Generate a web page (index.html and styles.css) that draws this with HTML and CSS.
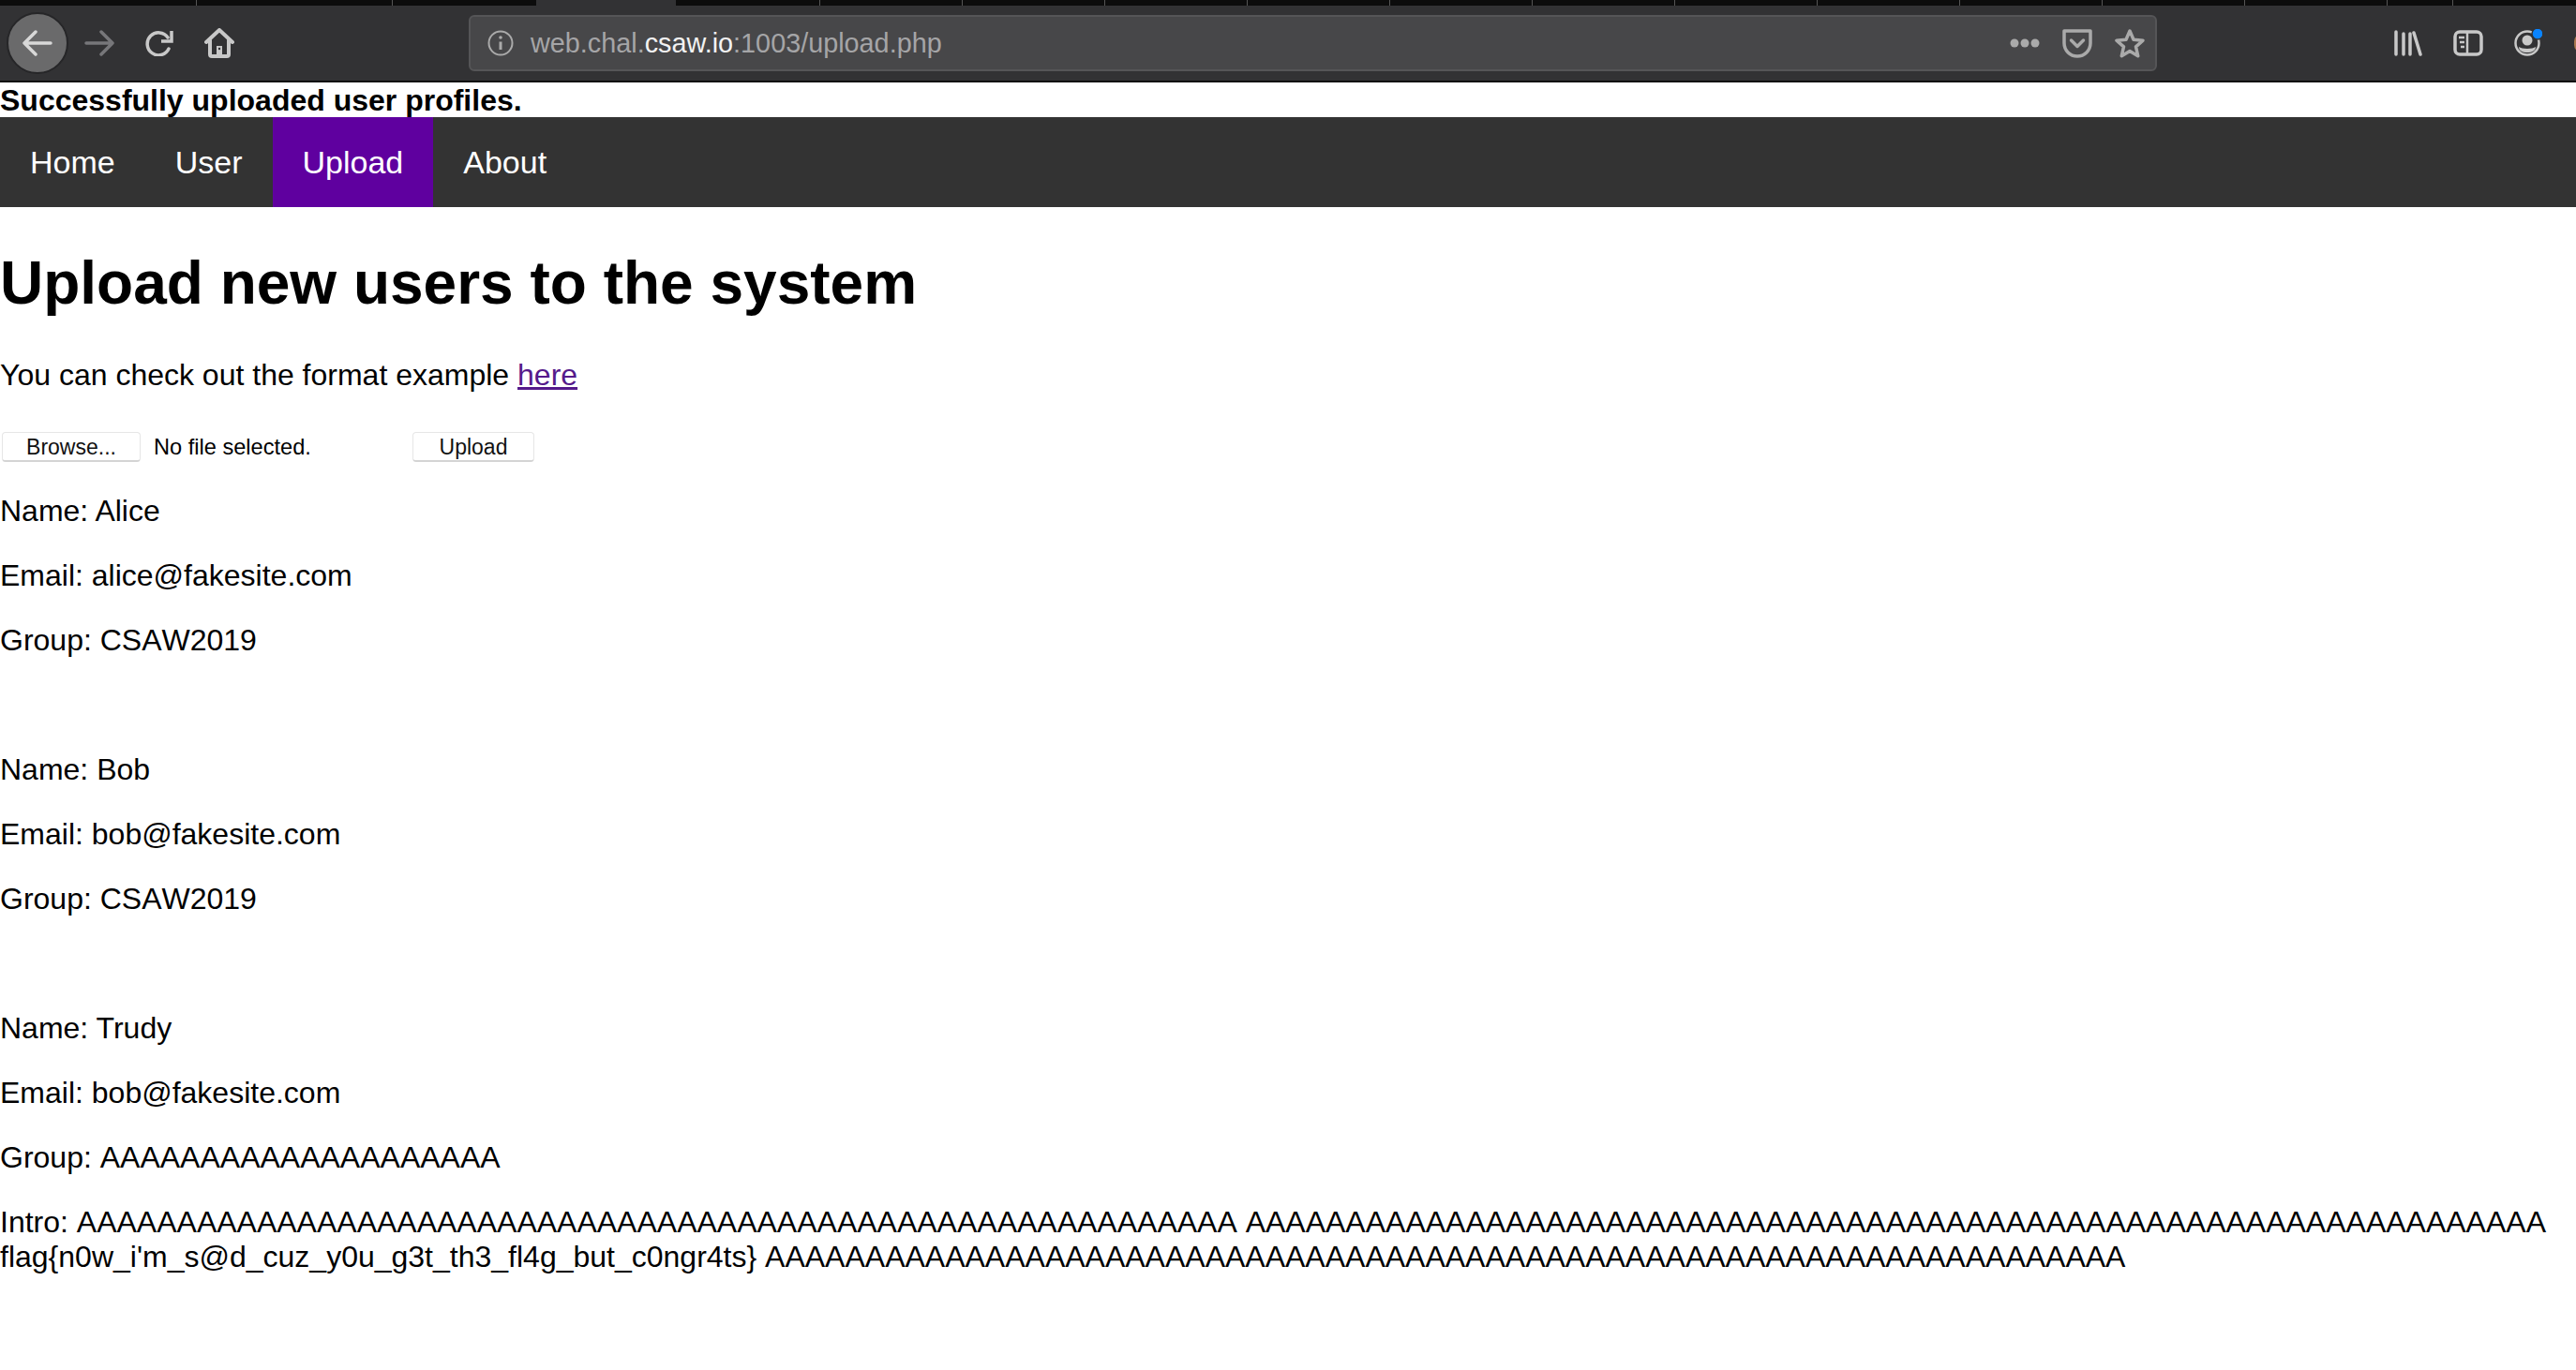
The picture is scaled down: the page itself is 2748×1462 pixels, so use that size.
FILE: index.html
```html
<!DOCTYPE html>
<html lang="en">
<head>
  <meta charset="UTF-8">
  <title>Upload</title>
  <link rel="stylesheet" href="styles.css">
</head>
<body>

  <div class="browser">
    <div class="tabs">
      <span class="tab tab-1"></span>
      <span class="tab tab-2"></span>
      <span class="tab tab-3"></span>
      <span class="tab tab-ativa"></span>
      <span class="tab tab-5"></span>
      <span class="tab"></span>
      <span class="tab"></span>
      <span class="tab"></span>
      <span class="tab"></span>
      <span class="tab"></span>
      <span class="tab"></span>
      <span class="tab"></span>
      <span class="tab"></span>
      <span class="tab"></span>
      <span class="tab"></span>
      <span class="tab"></span>
      <span class="tab tab-curta"></span>
      <span class="tab tab-fim"></span>
    </div>
    <div class="toolbar">
      <div class="nav-botoes">
        <span class="voltar">
          <svg width="32" height="28" viewBox="0 0 32 28" fill="none" stroke="#d8d8d8" stroke-width="3.500" stroke-linecap="round" stroke-linejoin="round"><path d="M2 14h28M14 2 2 14l12 12"/></svg>
        </span>
        <svg class="icone" width="32" height="28" viewBox="0 0 32 28" fill="none" stroke="#77777a" stroke-width="3.500" stroke-linecap="round" stroke-linejoin="round"><path d="M2 14h28M18 2l12 12-12 12"/></svg>
        <svg class="icone" width="30" height="28" viewBox="0 0 30 28" fill="none" stroke="#c8c8c8" stroke-width="3.500"><path d="M24 8A12 12 0 1 0 25 20" stroke-linecap="round"/><path d="M28 1v11H17" stroke-linejoin="miter"/></svg>
        <svg class="icone" width="32" height="32" viewBox="0 0 32 32" fill="none" stroke="#c8c8c8" stroke-width="4" stroke-linecap="round" stroke-linejoin="round"><path d="M2 15 16 2l14 13"/><path d="M6 13v15a2 2 0 0 0 2 2h16a2 2 0 0 0 2-2V13"/><rect x="13" y="19" width="6" height="10" fill="#c8c8c8" stroke="none"/><circle cx="16" cy="22" r="1.200" fill="#323234" stroke="none"/></svg>
      </div>
      <div class="urlbar">
        <svg width="28" height="28" viewBox="0 0 28 28" fill="none" stroke="#aaa" stroke-width="2"><circle cx="14" cy="14" r="12.500"/><path d="M14 12.500V21" stroke-width="3"/><circle cx="14" cy="8" r="1.800" fill="#aaa" stroke="none"/></svg>
        <span class="url">web.chal.<b>csaw.io</b>:1003/upload.php</span>
        <span class="url-icones">
          <svg width="32" height="10" viewBox="0 0 32 10" fill="#aaa"><circle cx="5" cy="5" r="4.500"/><circle cx="16" cy="5" r="4.500"/><circle cx="27" cy="5" r="4.500"/></svg>
          <svg width="32" height="32" viewBox="0 0 32 32" fill="none" stroke="#aaa" stroke-width="3.500" stroke-linejoin="round"><path d="M2 3h28v13a14 14 0 0 1-28 0z"/><path d="M9.500 13l6.500 6.500 6.500-6.500" stroke-linecap="round"/></svg>
          <svg width="32" height="32" viewBox="0 0 32 32" fill="none" stroke="#aaa" stroke-width="3.500" stroke-linejoin="round"><path d="M16 3l4 9.200 10 1-7.500 6.700 2.200 9.800-8.700-5.100-8.700 5.100 2.200-9.800L2 13.200l10-1z"/></svg>
        </span>
      </div>
      <div class="ferramentas">
        <svg width="30" height="28" viewBox="0 0 30 28" fill="none" stroke="#c8c8c8" stroke-width="3.500" stroke-linecap="round"><path d="M2 2v24M10 4v22M17 4v22M21 3l7 23"/></svg>
        <svg width="32" height="28" viewBox="0 0 32 28" fill="none" stroke="#c8c8c8" stroke-width="3.500"><rect x="2" y="2" width="28" height="24" rx="5"/><path d="M15 2v24" stroke-width="2.500"/><path d="M6 8h6M7 13h5M8 18h4" stroke-width="2.500"/></svg>
        <svg width="30" height="30" viewBox="0 0 30 30" fill="none"><circle cx="14" cy="15" r="12.500" stroke="#c8c8c8" stroke-width="2.500"/><circle cx="14" cy="12" r="5.500" fill="#c8c8c8"/><path d="M5 19c3 2.500 15 2.500 18 0 0 4-4 6-9 6s-9-2-9-6z" fill="#c8c8c8"/><circle cx="25" cy="5" r="6" fill="#0a84ff" stroke="#323234" stroke-width="1.500"/></svg>
        <span class="extensao"></span>
      </div>
    </div>
  </div>

  <b class="aviso">Successfully uploaded user profiles.</b>

  <ul class="menu">
    <li><a href="#">Home</a></li>
    <li><a href="#">User</a></li>
    <li><a href="#" class="ativo">Upload</a></li>
    <li><a href="#">About</a></li>
  </ul>

  <h1>Upload new users to the system</h1>

  <p>You can check out the format example <a href="#" class="link">here</a></p>

  <form class="envio">
    <button type="button" class="botao botao-browse">Browse...</button>
    <span class="arquivo">No file selected.</span>
    <button type="button" class="botao botao-upload">Upload</button>
  </form>

  <p>Name: Alice</p>
  <p>Email: alice@fakesite.com</p>
  <p class="sem-kern">Group: CSAW2019</p>
  <p>&nbsp;</p>
  <p>Name: Bob</p>
  <p>Email: bob@fakesite.com</p>
  <p class="sem-kern">Group: CSAW2019</p>
  <p>&nbsp;</p>
  <p>Name: Trudy</p>
  <p>Email: bob@fakesite.com</p>
  <p class="sem-kern">Group: AAAAAAAAAAAAAAAAAAAA</p>
  <p class="sem-kern">Intro: AAAAAAAAAAAAAAAAAAAAAAAAAAAAAAAAAAAAAAAAAAAAAAAAAAAAAAAAAA AAAAAAAAAAAAAAAAAAAAAAAAAAAAAAAAAAAAAAAAAAAAAAAAAAAAAAAAAAAAAAAAA flag{n0w_i'm_s@d_cuz_y0u_g3t_th3_fl4g_but_c0ngr4ts} AAAAAAAAAAAAAAAAAAAAAAAAAAAAAAAAAAAAAAAAAAAAAAAAAAAAAAAAAAAAAAAAAAAA</p>

</body>
</html>
```

FILE: styles.css
```css
body {
  margin: 0;
  font-family: "Liberation Sans", Arial, sans-serif;
  font-size: 32px;
  line-height: 37px;
  color: #000;
  background: #fff;
  overflow: hidden;
}

.browser {
  background: #323234;
  border-bottom: 2px solid #111;
}

.tabs {
  display: flex;
  height: 6px;
  background: #0c0c0c;
}

.tab {
  flex: none;
  width: 152px;
  box-sizing: border-box;
  border-right: 1px solid #555;
}

.tab-1 {
  width: 210px;
}

.tab-2 {
  width: 209px;
}

.tab-3 {
  width: 153px;
  border-right: none;
}

.tab-ativa {
  width: 149px;
  background: #323234;
  border-right: none;
}

.tab-5 {
  width: 154px;
}

.tab-curta {
  width: 70px;
}

.tab-fim {
  flex: 1;
  border-right: none;
}

.toolbar {
  display: flex;
  align-items: center;
  height: 80px;
  font-size: 28.800px;
}

.nav-botoes {
  display: flex;
  align-items: center;
  flex: none;
  width: 500px;
  padding-left: 8px;
  box-sizing: border-box;
}

.voltar {
  display: flex;
  align-items: center;
  justify-content: center;
  box-sizing: border-box;
  width: 66px;
  height: 66px;
  margin-left: -1px;
  border-radius: 50%;
  background: #6a6a6b;
  border: 2px solid #262628;
  margin-right: 17px;
}

.icone {
  margin-right: 33px;
}

.urlbar {
  display: flex;
  align-items: center;
  flex: none;
  width: 1801px;
  height: 60px;
  box-sizing: border-box;
  background: #474749;
  border: 2px solid #555557;
  border-radius: 6px;
  padding: 0 11px 0 18px;
}

.url {
  margin-left: 18px;
  color: #a5a5a7;
}

.url b {
  font-weight: normal;
  color: #f2f2f2;
}

.url-icones {
  margin-left: auto;
  display: flex;
  align-items: center;
  gap: 24px;
}

.ferramentas {
  display: flex;
  align-items: center;
  gap: 33px;
  margin-left: 253px;
}

.extensao {
  width: 8px;
  height: 20px;
  margin-left: 1px;
  background: #a9784f;
  border-radius: 10px 0 0 10px;
}

.aviso {
  display: block;
  height: 37px;
  line-height: 39px;
}

.menu {
  display: flex;
  list-style: none;
  margin: 0;
  padding: 0;
  background: #333;
}

.menu a {
  display: block;
  padding: 30px 32px 29px;
  color: #fff;
  font-size: 34px;
  text-decoration: none;
}

.menu a.ativo {
  background: #5f009f;
}

h1 {
  font-size: 64px;
  line-height: 74px;
  margin: 44px 0 43px;
}

p {
  margin: 0 0 32px;
}

.sem-kern {
  font-kerning: none;
}

.link {
  color: #551a8b;
}

.envio {
  display: flex;
  align-items: center;
  height: 46px;
  margin-top: 35px;
  margin-bottom: 27px;
  font-size: 23px;
  line-height: 30px;
}

.botao {
  box-sizing: border-box;
  height: 32px;
  padding: 0;
  background: #fff;
  border: 1px solid #e6e6e6;
  border-bottom: 2px solid #d4d4d4;
  border-radius: 4px;
  font: inherit;
  color: #111;
}

.botao-browse {
  width: 148px;
  margin-left: 2px;
}

.arquivo {
  width: 276px;
  margin-left: 14px;
  font-size: 23.600px;
}

.botao-upload {
  width: 130px;
}
```
